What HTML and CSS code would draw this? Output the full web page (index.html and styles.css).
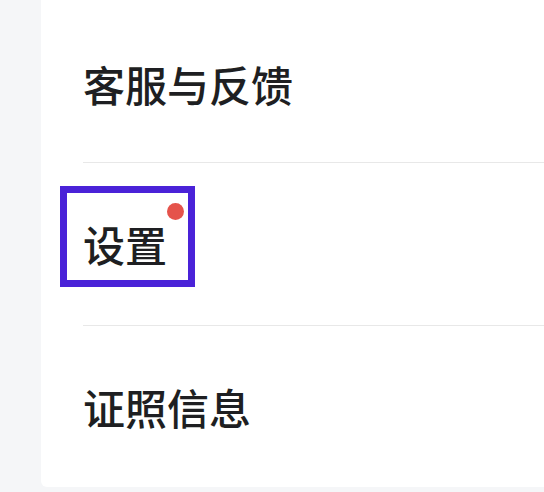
FILE: index.html
```html
<!DOCTYPE html>
<html lang="zh-CN">
<head>
<meta charset="utf-8">
<title>设置</title>
<link rel="stylesheet" href="styles.css">
</head>
<body>
<main class="card">
  <div class="row row-first"><span class="label">客服与反馈</span></div>
  <div class="row">
    <span class="label label-marked">设置<span class="highlight"></span><span class="dot"></span></span>
  </div>
  <div class="row row-last"><span class="label">证照信息</span></div>
</main>
</body>
</html>
```
FILE: styles.css
```css
html, body {
  margin: 0;
  padding: 0;
}
body {
  background: #f5f6f8;
  width: 544px;
  height: 492px;
  overflow: hidden;
  font-family: "Noto Sans CJK SC", "Noto Sans", sans-serif;
}
.card {
  margin-left: 41px;
  height: 487px;
  background: #ffffff;
  border-bottom-left-radius: 6px;
  padding-top: 5px;
  padding-left: 42px;
  box-sizing: border-box;
}
.row {
  height: 162px;
  display: flex;
  align-items: center;
  border-bottom: 1px solid #e8e8e8;
}
.row-first {
  height: 157px;
}
.row-last {
  border-bottom: none;
}
.label {
  font-size: 42px;
  line-height: 50px;
  font-weight: 500;
  color: #1e1f22;
  letter-spacing: 0;
}
.label-marked {
  position: relative;
}
.highlight {
  position: absolute;
  left: -23px;
  top: -33px;
  width: 135px;
  height: 101px;
  box-sizing: border-box;
  border: 7px solid #4a22d8;
}
.dot {
  position: absolute;
  left: 84px;
  top: -16px;
  width: 17px;
  height: 17px;
  border-radius: 50%;
  background: #e5534b;
}
```
